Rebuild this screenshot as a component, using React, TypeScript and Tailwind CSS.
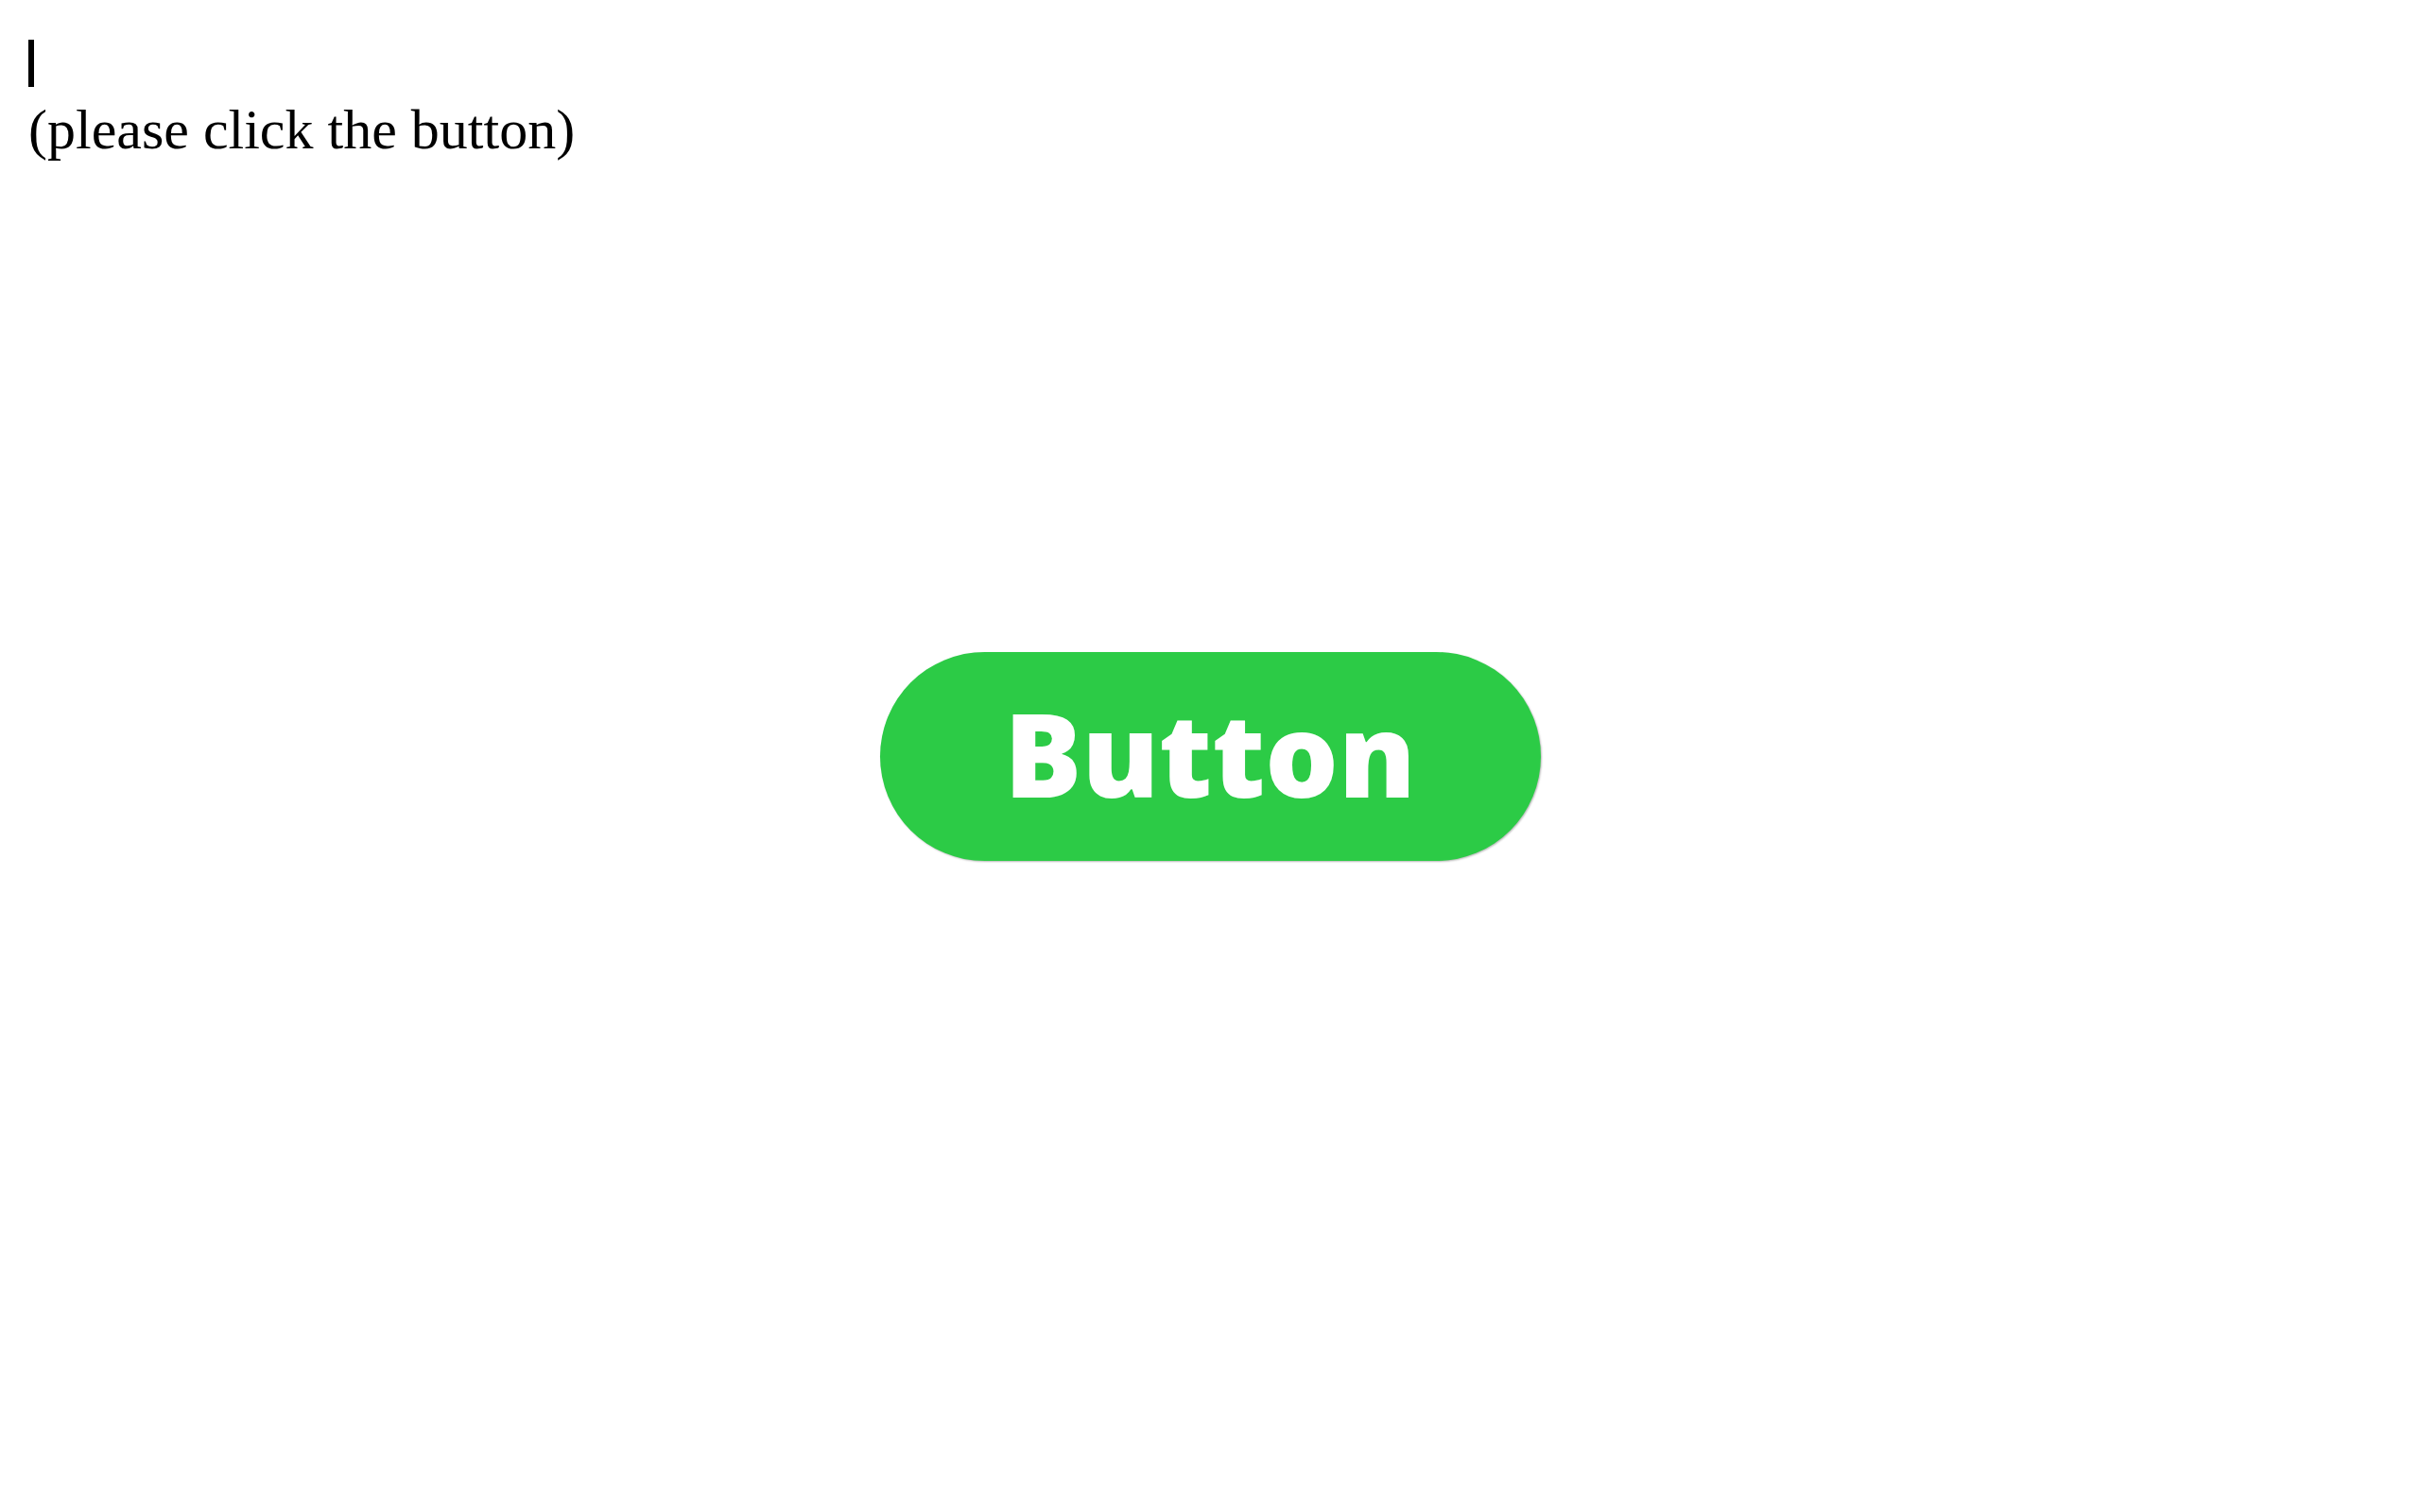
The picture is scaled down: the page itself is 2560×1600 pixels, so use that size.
export default function App() {
  return (
    <div className="grid h-screen w-full bg-white">
      {/* top-left prompt */}
      <div className="col-start-1 row-start-1 self-start justify-self-start pl-[30px] pt-[37px] font-['Liberation_Serif','Times_New_Roman',serif] text-[60px] leading-[normal] text-black">
        <div className="flex h-[66px] items-start pt-[5px]">
          <span className="block h-[50px] w-[6px] bg-black" />
        </div>
        <p>(please click the button)</p>
      </div>

      {/* centered button */}
      <button
        type="button"
        className="col-start-1 row-start-1 flex h-[221px] w-[699px] items-center justify-center place-self-center rounded-full bg-[#2ccb46] pb-[6px] font-['Open_Sans','Noto_Sans',sans-serif] text-[122px] font-extrabold leading-none text-white shadow-[1px_1px_2px_rgba(0,0,0,0.28)]"
      >
        Button
      </button>
    </div>
  );
}
